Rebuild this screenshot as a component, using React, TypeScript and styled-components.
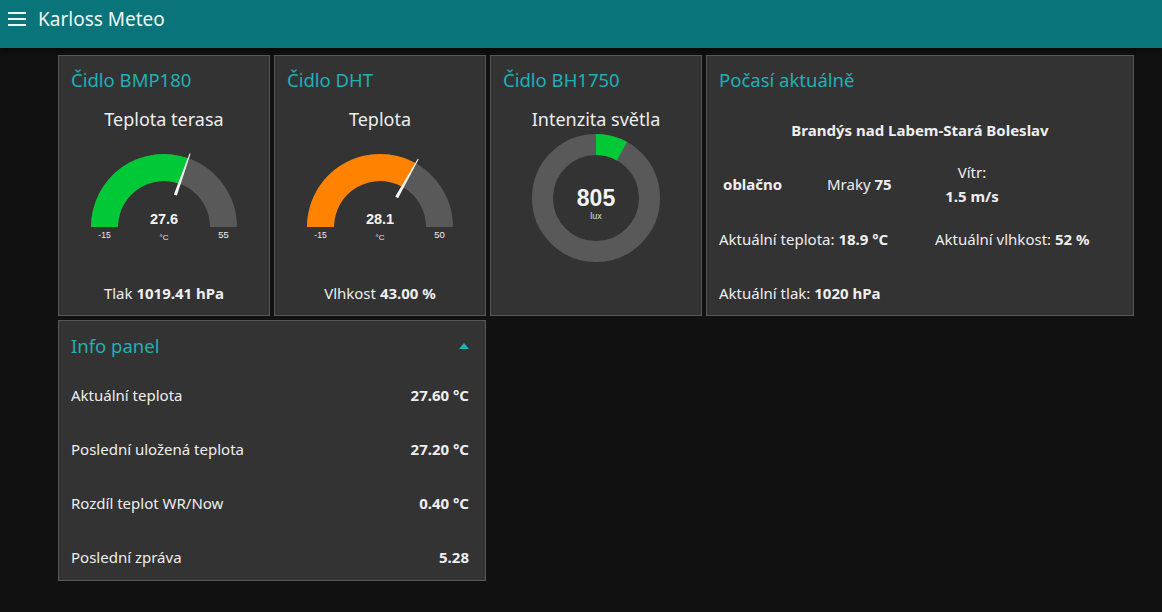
import styled, { createGlobalStyle } from 'styled-components';

const GlobalStyle = createGlobalStyle`
  html, body {
    margin: 0;
    padding: 0;
    background-color: #111111;
    font-family: 'Noto Sans', 'Open Sans', sans-serif;
    color: #eeeeee;
  }
  * {
    box-sizing: border-box;
  }
`;

const TopBar = styled.div`
  height: 48px;
  background-color: #097479;
  display: flex;
  align-items: center;
  padding: 0 0 10px 8px;
  gap: 12px;
  box-shadow: 0 2px 4px rgba(0, 0, 0, 0.6);
`;

const MenuIcon = styled.svg`
  width: 18px;
  height: 14px;
  display: block;
`;

const AppTitle = styled.div`
  font-size: 19px;
  line-height: 24px;
  color: #eef7f7;
`;

const Board = styled.div`
  display: grid;
  grid-template-columns: 212px 212px 212px 428px;
  grid-auto-rows: 261px;
  gap: 4px;
  padding: 7px 0 0 58px;
`;

const Card = styled.div<{ $span?: number }>`
  grid-column: span ${({ $span }) => $span ?? 1};
  background-color: #333333;
  border: 1px solid #575757;
  overflow: hidden;
  display: flex;
  flex-direction: column;
`;

const CardTitle = styled.div<{ $top?: number }>`
  display: flex;
  align-items: center;
  justify-content: space-between;
  padding: ${({ $top }) => $top ?? 12}px 12px 0 12px;
  font-size: 18.5px;
  line-height: 24px;
  color: #1fb0b6;
`;

const WidgetLabel = styled.div`
  margin-top: 15px;
  text-align: center;
  font-size: 18px;
  line-height: 24px;
  color: #eeeeee;
`;

const GaugeSvg = styled.svg<{ $top: number }>`
  display: block;
  margin: ${({ $top }) => $top}px auto 0;
  overflow: visible;
`;

const Footer = styled.div`
  margin-top: 38px;
  text-align: center;
  font-size: 15px;
  line-height: 20px;
`;

const Strong = styled.b`
  font-weight: 700;
`;

const City = styled.div`
  margin-top: 28px;
  text-align: center;
  font-size: 15px;
  font-weight: 700;
  line-height: 20px;
`;

const WeatherRow = styled.div<{ $cols: string; $top: number }>`
  display: grid;
  grid-template-columns: ${({ $cols }) => $cols};
  align-items: center;
  padding: 0 12px;
  margin-top: ${({ $top }) => $top}px;
  font-size: 15px;
  line-height: 20px;
`;

const Indented = styled.div`
  padding-left: 4px;
  font-weight: 700;
`;

const WindCol = styled.div`
  text-align: center;
  line-height: 24px;
`;

const InfoList = styled.div`
  display: flex;
  flex-direction: column;
  gap: 6px;
  margin-top: 13px;
  padding: 0 16px 0 12px;
`;

const InfoRow = styled.div`
  height: 48px;
  display: flex;
  align-items: center;
  justify-content: space-between;
  font-size: 15px;
`;

const Caret = styled.svg`
  width: 10px;
  height: 6px;
  display: block;
  margin-right: 4px;
`;

const GAUGE_R = 73;
const GAUGE_r = 46;

const polar = (cx: number, cy: number, r: number, f: number) => {
  const a = Math.PI * (1 - f);
  return [cx + r * Math.cos(a), cy - r * Math.sin(a)];
};

const sector = (cx: number, cy: number, f0: number, f1: number) => {
  const [ax, ay] = polar(cx, cy, GAUGE_R, f0);
  const [bx, by] = polar(cx, cy, GAUGE_R, f1);
  const [cx2, cy2] = polar(cx, cy, GAUGE_r, f1);
  const [dx, dy] = polar(cx, cy, GAUGE_r, f0);
  return `M${ax} ${ay} A${GAUGE_R} ${GAUGE_R} 0 0 1 ${bx} ${by} L${cx2} ${cy2} A${GAUGE_r} ${GAUGE_r} 0 0 0 ${dx} ${dy} Z`;
};

type GaugeProps = { value: number; min: number; max: number; color: string };

const Gauge = ({ value, min, max, color }: GaugeProps) => {
  const cx = 90;
  const cy = 77;
  const f = (value - min) / (max - min);
  const a = Math.PI * (1 - f);
  const ux = Math.cos(a);
  const uy = -Math.sin(a);
  const px = -uy;
  const py = ux;
  const base = 34;
  const tip = 78;
  const needle = [
    [cx + ux * base + px * 1.6, cy + uy * base + py * 1.6],
    [cx + ux * tip + px * 0.5, cy + uy * tip + py * 0.5],
    [cx + ux * tip - px * 0.5, cy + uy * tip - py * 0.5],
    [cx + ux * base - px * 1.6, cy + uy * base - py * 1.6],
  ]
    .map((p) => p.join(','))
    .join(' ');
  const labelX = (GAUGE_R + GAUGE_r) / 2;

  return (
    <GaugeSvg $top={19} width={180} height={95} viewBox="0 0 180 95">
      <path d={sector(cx, cy, 0, 1)} fill="#595959" />
      <path d={sector(cx, cy, 0, f)} fill={color} />
      <polygon points={needle} fill="#f4f4f4" />
      <text x={cx} y={cy - 3} textAnchor="middle" fill="#f2f2f2" fontFamily="'Liberation Sans', Arial, sans-serif" fontWeight="700" fontSize="14.5">
        {value.toFixed(1)}
      </text>
      <text x={cx} y={cy + 13} textAnchor="middle" fill="#eeeeee" fontFamily="'Liberation Sans', Arial, sans-serif" fontSize="8">
        °C
      </text>
      <text x={cx - labelX} y={cy + 11} textAnchor="middle" fill="#eeeeee" fontFamily="'Liberation Sans', Arial, sans-serif" fontSize="8.5">
        {min}
      </text>
      <text x={cx + labelX} y={cy + 11} textAnchor="middle" fill="#eeeeee" fontFamily="'Liberation Sans', Arial, sans-serif" fontSize="9.5">
        {max}
      </text>
    </GaugeSvg>
  );
};

const Donut = ({ value, max }: { value: number; max: number }) => {
  const c = 65;
  const R = 64;
  const r = 43;
  const t = (value / max) * Math.PI * 2;
  const ox = c + R * Math.sin(t);
  const oy = c - R * Math.cos(t);
  const ix = c + r * Math.sin(t);
  const iy = c - r * Math.cos(t);
  const d = `M${c} ${c - R} A${R} ${R} 0 0 1 ${ox} ${oy} L${ix} ${iy} A${r} ${r} 0 0 0 ${c} ${c - r} Z`;
  return (
    <GaugeSvg $top={2} width={130} height={130} viewBox="0 0 130 130">
      <circle cx={c} cy={c} r={(R + r) / 2} fill="none" stroke="#595959" strokeWidth={R - r} />
      <path d={d} fill="#00c837" />
      <text x={c} y={c + 8} textAnchor="middle" fill="#f4f4f4" fontFamily="'Liberation Sans', Arial, sans-serif" fontWeight="700" fontSize="23">
        {value}
      </text>
      <text x={c} y={c + 21} textAnchor="middle" fill="#dddddd" fontFamily="'Liberation Sans', Arial, sans-serif" fontSize="9">
        lux
      </text>
    </GaugeSvg>
  );
};

const infoRows = [
  { label: 'Aktuální teplota', value: '27.60 °C' },
  { label: 'Poslední uložená teplota', value: '27.20 °C' },
  { label: 'Rozdíl teplot WR/Now', value: '0.40 °C' },
  { label: 'Poslední zpráva', value: '5.28' },
];

export default function App() {
  return (
    <>
      <GlobalStyle />
      <TopBar>
        <MenuIcon viewBox="0 0 18 14">
          <rect x="0" y="0" width="18" height="2" fill="#eef7f7" />
          <rect x="0" y="6" width="18" height="2" fill="#eef7f7" />
          <rect x="0" y="12" width="18" height="2" fill="#eef7f7" />
        </MenuIcon>
        <AppTitle>Karloss Meteo</AppTitle>
      </TopBar>
      <Board>
        <Card>
          <CardTitle>Čidlo BMP180</CardTitle>
          <WidgetLabel>Teplota terasa</WidgetLabel>
          <Gauge value={27.6} min={-15} max={55} color="#00c837" />
          <Footer>
            Tlak <Strong>1019.41 hPa</Strong>
          </Footer>
        </Card>
        <Card>
          <CardTitle>Čidlo DHT</CardTitle>
          <WidgetLabel>Teplota</WidgetLabel>
          <Gauge value={28.1} min={-15} max={50} color="#ff8200" />
          <Footer>
            Vlhkost <Strong>43.00 %</Strong>
          </Footer>
        </Card>
        <Card>
          <CardTitle>Čidlo BH1750</CardTitle>
          <WidgetLabel>Intenzita světla</WidgetLabel>
          <Donut value={805} max={10000} />
        </Card>
        <Card>
          <CardTitle>Počasí aktuálně</CardTitle>
          <City>Brandýs nad Labem-Stará Boleslav</City>
          <WeatherRow $cols="108px 95px 100px" $top={20}>
            <Indented>oblačno</Indented>
            <div>
              Mraky <Strong>75</Strong>
            </div>
            <WindCol>
              <div>Vítr:</div>
              <Strong>1.5 m/s</Strong>
            </WindCol>
          </WeatherRow>
          <WeatherRow $cols="216px 1fr" $top={21}>
            <div>
              Aktuální teplota: <Strong>18.9 °C</Strong>
            </div>
            <div>
              Aktuální vlhkost: <Strong>52 %</Strong>
            </div>
          </WeatherRow>
          <WeatherRow $cols="1fr" $top={34}>
            <div>
              Aktuální tlak: <Strong>1020 hPa</Strong>
            </div>
          </WeatherRow>
        </Card>
        <Card $span={2}>
          <CardTitle $top={13}>
            Info panel
            <Caret viewBox="0 0 10 6">
              <polygon points="0,6 5,0 10,6" fill="#1fb0b6" />
            </Caret>
          </CardTitle>
          <InfoList>
            {infoRows.map((row) => (
              <InfoRow key={row.label}>
                <span>{row.label}</span>
                <Strong>{row.value}</Strong>
              </InfoRow>
            ))}
          </InfoList>
        </Card>
      </Board>
    </>
  );
}
